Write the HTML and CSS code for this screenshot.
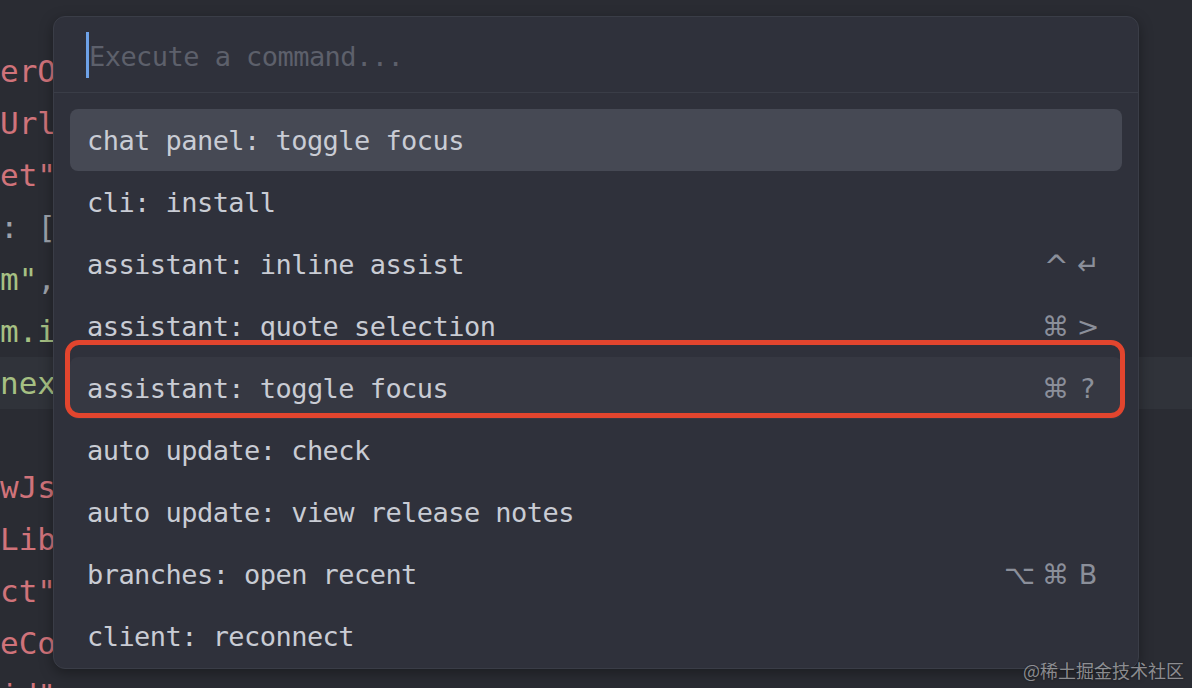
FILE: index.html
```html
<!DOCTYPE html>
<html lang="en">
<head>
<meta charset="utf-8">
<title>Command palette</title>
<link rel="stylesheet" href="styles.css">
</head>
<body>
<div class="editor">
  <div class="code">
    <div class="line"></div>
    <div class="line"><span class="s">erO</span></div>
    <div class="line"><span class="s">Url</span></div>
    <div class="line"><span class="s">et"</span></div>
    <div class="line"><span class="p">: [</span></div>
    <div class="line"><span class="g">m"</span><span class="p">,</span></div>
    <div class="line"><span class="g">m.i</span></div>
    <div class="line current"><span class="g">nex</span></div>
    <div class="line"></div>
    <div class="line"><span class="s">wJs</span></div>
    <div class="line"><span class="s">Lib</span></div>
    <div class="line"><span class="s">ct"</span></div>
    <div class="line"><span class="s">eCo</span></div>
    <div class="line"><span class="s">id"</span></div>
  </div>

  <div class="palette">
    <div class="query">
      <span class="caret"></span>
      <span class="placeholder">Execute a command...</span>
    </div>
    <div class="list">
      <div class="row selected"><span class="name">chat panel: toggle focus</span></div>
      <div class="row"><span class="name">cli: install</span></div>
      <div class="row"><span class="name">assistant: inline assist</span><span class="keys"><span class="key ctrl">^</span><span class="key">↵</span></span></div>
      <div class="row"><span class="name">assistant: quote selection</span><span class="keys"><span class="key">⌘</span><span class="key">&gt;</span></span></div>
      <div class="row hover"><span class="name">assistant: toggle focus</span><span class="keys"><span class="key">⌘</span><span class="key">?</span></span></div>
      <div class="row"><span class="name">auto update: check</span></div>
      <div class="row"><span class="name">auto update: view release notes</span></div>
      <div class="row"><span class="name">branches: open recent</span><span class="keys"><span class="key">⌥</span><span class="key">⌘</span><span class="key">B</span></span></div>
      <div class="row"><span class="name">client: reconnect</span></div>
    </div>
  </div>

  <div class="annotation"></div>
  <div class="watermark">@稀土掘金技术社区</div>
</div>
</body>
</html>
```

FILE: styles.css
```css
html, body {
  margin: 0;
  padding: 0;
  background: #2a2c33;
}

body {
  width: 1192px;
  height: 688px;
  overflow: hidden;
}

.editor {
  position: relative;
  width: 1192px;
  height: 688px;
  overflow: hidden;
  background: #2a2c33;
}

.code {
  margin-top: -7px;
  font-family: "DejaVu Sans Mono", monospace;
  font-size: 31px;
}

.line {
  height: 52px;
  line-height: 52px;
  white-space: pre;
}

.line.current {
  background: #30333a;
}

.s { color: #d0737a; }
.g { color: #a6c083; }
.p { color: #9da2ab; }

.palette {
  position: absolute;
  left: 53px;
  top: 16px;
  width: 1086px;
  height: 653px;
  box-sizing: border-box;
  display: flex;
  flex-direction: column;
  background: #2f313b;
  border: 1px solid #3a3d47;
  border-radius: 12px;
  box-shadow: 0 4px 14px rgba(0, 0, 0, 0.35);
  overflow: hidden;
  font-family: "DejaVu Sans Mono", monospace;
  font-size: 27px;
  letter-spacing: -0.55px;
}

.query {
  height: 75px;
  flex: none;
  display: flex;
  align-items: center;
  padding-left: 32px;
  border-bottom: 1px solid #3a3d47;
}

.caret {
  width: 3px;
  height: 46px;
  background: #6ea2e8;
}

.placeholder {
  color: #5d606b;
  padding-top: 3px;
}

.list {
  flex: 1;
  min-height: 0;
  overflow: hidden;
  padding: 16px 16px 0;
}

.row {
  height: 62px;
  display: flex;
  align-items: center;
  justify-content: space-between;
  padding: 0 22px 0 17px;
  box-sizing: border-box;
  border-radius: 8px;
  color: #c9ccd4;
  white-space: pre;
}

.row.selected {
  background: #464954;
}

.row.hover {
  background: #363842;
}

.keys {
  display: flex;
  align-items: center;
  gap: 7px;
  color: #8b8f9a;
  font-family: "DejaVu Sans", sans-serif;
  font-size: 27px;
  letter-spacing: 0;
}

.key {
  min-width: 24px;
  text-align: center;
}

.key.ctrl {
  font-size: 30px;
  position: relative;
  top: 2px;
}

.annotation {
  position: absolute;
  left: 65px;
  top: 340px;
  width: 1060px;
  height: 78px;
  box-sizing: border-box;
  border: 5px solid #e2452e;
  border-radius: 14px;
}

.watermark {
  position: absolute;
  right: 8px;
  bottom: 5px;
  font-family: "Noto Sans CJK SC", sans-serif;
  font-size: 18px;
  color: rgba(215, 215, 218, 0.6);
  text-shadow: 0 0 2px rgba(0, 0, 0, 0.4);
}
```
